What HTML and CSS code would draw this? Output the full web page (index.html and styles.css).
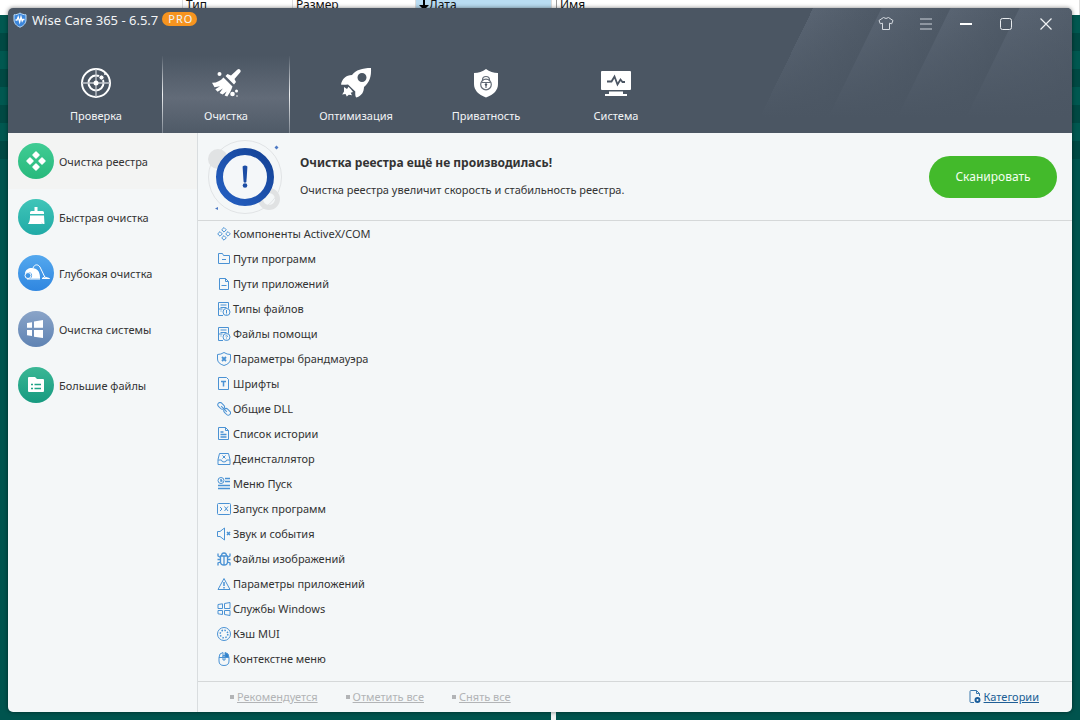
FILE: index.html
```html
<!DOCTYPE html>
<html lang="ru">
<head>
    <meta charset="UTF-8">
    <title>Wise Care 365</title>
    <link rel="stylesheet" href="styles.css">
</head>
<body>
    <div class="backdrop">
        <div class="columns">
            <span class="col col-first"></span>
            <span class="col col-type">Тип</span>
            <span class="col col-size">Размер</span>
            <span class="col col-date"><svg width="10" height="11" viewBox="0 0 10 11"><path d="M4 0h2v5h4l-5 5-5-5h4z"/></svg>Дата</span>
            <span class="col col-name">Имя</span>
        </div>
        <div class="splitter"></div>
    </div>

    <div class="window">
        <header class="top">
            <div class="titlebar">
                <svg class="logo" width="14" height="16" viewBox="0 0 14 16">
                    <path d="M7 1c2 1.300 4 1.800 6 1.800v5c0 3.500-2.500 6-6 7.400C3.500 13.800 1 11.300 1 7.800v-5C3 2.800 5 2.300 7 1z" fill="#3b86dc" stroke="#b9dcfb"/>
                    <path d="M2.500 8h1.500l1.200-3 1.500 5 1.300-5 1.200 4 .8-1.500h1.500" fill="none" stroke="#fff" stroke-width="1.300"/>
                </svg>
                <h1>Wise Care 365 - 6.5.7</h1>
                <span class="pro">PRO</span>
                <div class="controls">
                    <button type="button" aria-label="Оформление">
                        <svg width="16" height="16" viewBox="0 0 16 16" stroke="#d5dae0"><path d="M5.500 1.500Q8 3.500 10.500 1.500L15 4.500l-1.300 3.300-2.200-.6v6.300h-7V7.200l-2.200.6L1 4.500z"/></svg>
                    </button>
                    <button type="button" aria-label="Меню">
                        <svg width="16" height="16" viewBox="0 0 16 16" stroke="#a3abb4" stroke-width="1.500"><path d="M2 3h12M2 8h12M2 13h12"/></svg>
                    </button>
                    <button type="button" aria-label="Свернуть">
                        <svg width="16" height="16" viewBox="0 0 16 16" stroke="#fff" stroke-width="2"><path d="M2 8h12"/></svg>
                    </button>
                    <button type="button" aria-label="Развернуть">
                        <svg width="16" height="16" viewBox="0 0 16 16" stroke="#e8ebee"><rect x="2.500" y="2.500" width="11" height="11" rx="2"/></svg>
                    </button>
                    <button type="button" aria-label="Закрыть">
                        <svg width="16" height="16" viewBox="0 0 16 16" stroke="#f0f2f4" stroke-width="1.200"><path d="M2.500 2.500l11 11M13.500 2.500l-11 11"/></svg>
                    </button>
                </div>
            </div>
            <nav class="tabs">
                <button type="button" class="tab">
                    <svg width="32" height="32" viewBox="0 0 32 32" fill="none" stroke="#fff">
                        <circle cx="16" cy="16" r="14" stroke-width="2"/>
                        <circle cx="16" cy="16" r="7.500" stroke-width="2"/>
                        <path d="M16 2v28M2 16h28" stroke="#c3c8ce" stroke-width="1.300"/>
                        <circle cx="16" cy="16" r="2.500" fill="#fff" stroke="none"/>
                        <circle cx="21.500" cy="10.500" r="2.600" fill="#fff" stroke="#4b5563"/>
                        <circle cx="25" cy="7" r="1" fill="#fff" stroke="none"/>
                    </svg>
                    Проверка
                </button>
                <button type="button" class="tab active">
                    <svg width="32" height="32" viewBox="0 0 32 32" fill="#fff">
                        <path d="M27.500 2.500a2 2 0 0 1 2.800 2.800L24.500 12l1.500 3-2 2.500-8.500-8.500L17.500 7l3.500 1.500z"/>
                        <path d="M13.500 10.500l9 9c-1 3.500-3 7-5.200 9.900l-2.700-1 2-4-4 3.200-3-1.700 3.200-4.300-5.200 3.200-2.300-2.500 4.700-3-5.500 1-2.500-4.500C6.500 16 10.500 13.800 13.500 10.500z"/>
                        <circle cx="9.500" cy="7" r="2"/><circle cx="22.500" cy="27" r="2.300"/><circle cx="26.500" cy="24" r="1.500"/><circle cx="27" cy="29" r=".8"/>
                    </svg>
                    Очистка
                </button>
                <button type="button" class="tab">
                    <svg width="32" height="32" viewBox="0 0 32 32" fill="#fff">
                        <path d="M31 1c.5 8.500-1.500 14.500-7 19-.2 5-2 8.500-7.500 10.500-1-.3-1.500-2.500-1.200-6L8 17.500c-3 .3-6 .5-7 0C2 12 6 8 12 8c4-5 10-7 19-7zM22 6a4.500 4.500 0 1 0 0 9 4.500 4.500 0 0 0 0-9z" fill-rule="evenodd"/>
                        <path d="M4 20l3 2 1.500-2.300c1.500 1.500 3.500 3.500 4.500 5.200l-2.300.8 1.300 2.500-3.200-.5-2 1.800-1.300-2.500-3.300.5 1.800-3z"/>
                    </svg>
                    Оптимизация
                </button>
                <button type="button" class="tab">
                    <svg width="32" height="32" viewBox="0 0 32 32" fill="none">
                        <path d="M16 2c3.500 2.700 7.500 4 12 4v11c0 6-4 10.500-12 13.500C8 27.500 4 23 4 17V6c4.500 0 8.500-1.300 12-4z" fill="#fff"/>
                        <g stroke="#626b77" stroke-width="1.200"><circle cx="16" cy="17.500" r="5.300"/><path d="M12.500 13.500V13a3.500 3.500 0 0 1 7 0v.5M11.500 15.500h9M16 17v4"/></g>
                        <circle cx="16" cy="17.500" r="1.200" fill="#4b5563"/>
                    </svg>
                    Приватность
                </button>
                <button type="button" class="tab">
                    <svg width="32" height="32" viewBox="0 0 32 32" fill="#fff">
                        <path d="M2 4h28q1 0 1 1v17q0 1-1 1H2q-1 0-1-1V5q0-1 1-1zM9 24.500h14V27H9zM5 27h22v2H5z"/>
                        <path d="M7 14.500h4.500l3-5 3 8 3-5 2 2.500H25" fill="none" stroke="#4b5563" stroke-width="1.800"/>
                    </svg>
                    Система
                </button>
            </nav>
        </header>

        <div class="body">
            <nav class="sidebar">
                <button type="button" class="side-item active">
                    <svg class="disc registry" viewBox="0 0 36 36"><path d="M18 9l3 3-3 3-3-3zM12 15l3 3-3 3-3-3zM24 15l3 3-3 3-3-3zM18 21l3 3-3 3-3-3z" stroke="#fff" stroke-width="1.500" stroke-linejoin="round"/></svg>
                    Очистка реестра
                </button>
                <button type="button" class="side-item">
                    <svg class="disc quick" viewBox="0 0 36 36"><path d="M16.500 8h3v4h5q1.500 0 1.500 1.500V15H12v-1.500q0-1.500 1.500-1.500h3zM12 16.500h14l.5 8.500h-2l-1-2 .5 2H10c2-2.500 2-5.500 2-8.500z"/></svg>
                    Быстрая очистка
                </button>
                <button type="button" class="side-item">
                    <svg class="disc deep" viewBox="0 0 36 36"><path d="M7 18c.5-3 3-5 7-5 5 0 8 3.500 8 9.500v1h-9.500a3.500 3.500 0 1 0-5-4.500z"/><g fill="none" stroke="#fff" stroke-width="1"><circle cx="10" cy="20.500" r="3"/><path d="M15 13c1.500-4 5-4 7-1l5 10.500M24 23.500l2.500-1.500 5 1.500zM9 24h13"/></g></svg>
                    Глубокая очистка
                </button>
                <button type="button" class="side-item">
                    <svg class="disc system" viewBox="0 0 36 36"><path d="M9 12l5-.8v5.600H9zM16 10.500l9-1.500v7.800h-9zM9 19h5v6l-5-.8zM16 19h9v8l-9-1.300z"/></svg>
                    Очистка системы
                </button>
                <button type="button" class="side-item">
                    <svg class="disc large" viewBox="0 0 36 36"><path d="M11 10h6l2 2h6q1 0 1 1v11q0 1-1 1H11q-1 0-1-1V11q0-1 1-1z"/><path d="M13 17.500h2m1.500 0h6.500M13 21.500h2m1.500 0h6.500" stroke="#1fa487" stroke-width="1.500"/></svg>
                    Большие файлы
                </button>
            </nav>

            <main class="content">
                <section class="status">
                    <svg class="status-icon" width="76" height="76" viewBox="0 0 76 76">
                        <defs><linearGradient id="ring" x1="1" y1="0" x2="0" y2="1"><stop offset="0" stop-color="#144296"/><stop offset="1" stop-color="#2560c2"/></linearGradient></defs>
                        <circle cx="38" cy="38" r="36.500" fill="none" stroke="#e0e3e5"/>
                        <circle cx="11" cy="20" r="10" fill="#e1e3e4"/>
                        <circle cx="62" cy="60" r="8.500" fill="none" stroke="#e0e2e3" stroke-width="5"/>
                        <circle cx="38" cy="38" r="25.500" fill="#f4f7f9" stroke="url(#ring)" stroke-width="7"/>
                        <path d="M35.600 27.500q2.400-2 4.800 0l-1 15.500q-1.400 1.400-2.800 0z" fill="#1c4da5"/>
                        <circle cx="38" cy="46.500" r="2.300" fill="#1c4da5"/>
                        <path d="M69.500 6.500l2 2-2 2-2-2zM8 69.500l3-1.500v3z" fill="#4d79c4"/>
                    </svg>
                    <div class="status-text">
                        <h2>Очистка реестра ещё не производилась!</h2>
                        <p>Очистка реестра увеличит скорость и стабильность реестра.</p>
                    </div>
                    <button type="button" class="scan">Сканировать</button>
                </section>

                <ul class="list">
                    <li><svg viewBox="0 0 14 14"><path d="M7 .5l2.300 2.300L7 5.100 4.700 2.800zM3 4.600l2.300 2.300L3 9.200.7 6.900zM11 4.600l2.300 2.300L11 9.200 8.700 6.900zM7 8.600l2.300 2.300L7 13.200l-2.300-2.300z"/></svg>Компоненты ActiveX/COM</li>
                    <li><svg viewBox="0 0 14 14"><path d="M1.500 1.500h4l1 2h6v8h-11zM5 7.500h4"/></svg>Пути программ</li>
                    <li><svg viewBox="0 0 14 14"><path d="M2.500 1.500h6l3 3v8h-9zM8.500 1.500v3h3M4.500 8.500h5"/></svg>Пути приложений</li>
                    <li><svg viewBox="0 0 14 14"><path d="M6 13.500H1.500V.5h10v6M3.500 3h6M3.500 5.500h6M3.500 9h1M1.500 7h4"/><circle cx="9.500" cy="10" r="3.500"/><path d="M9.500 8v3M9.500 11.500v1"/></svg>Типы файлов</li>
                    <li><svg viewBox="0 0 14 14"><path d="M6 13.500H1.500V.5h10v6M3.500 3h6M3.500 5.500h6M3.500 9h1M1.500 7h4"/><circle cx="9.500" cy="10" r="3.500"/><path d="M8.500 9q1-1.500 2 0l-1 1.500M9.500 11.500v.8"/></svg>Файлы помощи</li>
                    <li><svg viewBox="0 0 14 14"><path d="M7 .5q3 2 6.500 2v4.500q0 4.500-6.500 6.500Q.5 11.500.5 7V2.500Q4 2.500 7 .5z"/><path d="M5 5l4 4M9 5L5 9" stroke-width="1.800"/></svg>Параметры брандмауэра</li>
                    <li><svg viewBox="0 0 14 14"><path d="M1.500 .5h8l2 2v10h-10z"/><path d="M4 4.500h5M6.500 4.500v5" stroke-width="1.500"/></svg>Шрифты</li>
                    <li><svg viewBox="0 0 14 14"><g transform="rotate(45 7 7)"><rect x="-1" y="4.500" width="7.500" height="4.500" rx="2.200"/><rect x="7.500" y="4.500" width="7.500" height="4.500" rx="2.200"/><path d="M3 7h8"/></g></svg>Общие DLL</li>
                    <li><svg viewBox="0 0 14 14"><path d="M1.500 .5h7l3 3v9h-10zM8.500 .5v3h3"/><path d="M3.500 5h3M3.500 7.500h6M3.500 10h6" stroke-width="1.400"/></svg>Список истории</li>
                    <li><svg viewBox="0 0 14 14"><path d="M2.500 1.500h9l1.500 6v5H1v-5zM1 8h3.500q0 2 2.500 2t2.500-2H13M5.500 3.500l3 3M8.500 3.500l-3 3"/></svg>Деинсталлятор</li>
                    <li><svg viewBox="0 0 14 14"><circle cx="4" cy="3.500" r="3"/><path d="M4 2v2h1.500M8 1.500h5M8 4.500h5M1 8.500h12M1 11.500h12" stroke-width="1.500"/></svg>Меню Пуск</li>
                    <li><svg viewBox="0 0 14 14"><rect x=".5" y="1.500" width="13" height="11" rx="1"/><path d="M3 5l2 2-2 2M7.500 4.500l3.500 4.500M11 4.500L7.500 9"/></svg>Запуск программ</li>
                    <li><svg viewBox="0 0 14 14"><path d="M.5 4.500h2.500l4.500-3.500v12L3 9.500H.5z"/><path d="M10 5l3 3M13 5l-3 3" stroke-width="1.500"/></svg>Звук и события</li>
                    <li><svg viewBox="0 0 14 14"><path d="M3.500 4h7v6q0 3-3.500 3t-3.500-3zM4.500 4q0-3 2.500-3t2.500 3M7 4v9M3.500 5.500L1 4V1.500M10.500 5.500L13 4V1.500M.5 7.500h3M10.500 7.500h3M3.500 10L1 11v2.500M10.500 10l2.500 1v2.500" stroke-width="1.300"/></svg>Файлы изображений</li>
                    <li><svg viewBox="0 0 14 14"><path d="M7 1.500l6 11H1z"/><path d="M7 5v4M7 10v1.500" stroke-width="1.500"/></svg>Параметры приложений</li>
                    <li><svg viewBox="0 0 14 14"><path d="M1 2.500l4.500-.7v4.700H1zM7.500 1.500l5.500-1v6H7.500zM1 8.500h4.500v4L1 11.800zM7.500 8.500H13v5l-5.500-1z"/></svg>Службы Windows</li>
                    <li><svg viewBox="0 0 14 14"><circle cx="7" cy="7" r="6.500"/><circle cx="7" cy="7" r="3.800" stroke-width="1.500" stroke-dasharray="1.500 1.480"/></svg>Кэш MUI</li>
                    <li><svg viewBox="0 0 14 14"><path d="M2 5.500h10v3.500q0 4.500-5 4.500T2 9zM2 5.500q0-4.500 4-5V5.500M6 3.500h2V8H6z"/><path d="M8 .5q4 .5 4 5H8z" fill="#2f80c9"/></svg>Контекстне меню</li>
                </ul>

                <footer class="bottom">
                    <a href="#" class="pick">Рекомендуется</a>
                    <a href="#" class="pick">Отметить все</a>
                    <a href="#" class="pick">Снять все</a>
                    <a href="#" class="categories"><svg width="12" height="14" viewBox="0 0 12 14"><path d="M5 12.500H2q-1 0-1-1v-10q0-1 1-1h5.500l3 3V6M7.500.5v3h3" fill="none" stroke="#3c79ad"/><circle cx="8.500" cy="10" r="2" fill="none" stroke="#1d5f9c" stroke-width="2"/></svg><span>Категории</span></a>
                </footer>
            </main>
        </div>
    </div>
</body>
</html>
```
FILE: styles.css
```css
* {
    box-sizing: border-box;
}

body {
    margin: 0;
    padding: 8px;
    min-height: 100vh;
    display: flex;
    background: #00544e;
    font-family: Tahoma, "Noto Sans", sans-serif;
    font-size: 11px;
    color: #333;
}

button {
    font: inherit;
    color: inherit;
    background: none;
    border: 0;
    padding: 0;
    cursor: pointer;
}

h1, h2, p, ul {
    margin: 0;
    padding: 0;
}

/* окно позади программы */
.backdrop {
    position: absolute;
    inset: 0;
    overflow: hidden;
    background: repeating-linear-gradient(#005850 0 18px, #004943 18px 36px) 0 15px / 100% 144px no-repeat;
}

.columns {
    display: flex;
    height: 15px;
    background: #fff;
    color: #111;
    font-size: 12px;
    line-height: 10px;
}

.columns svg {
    vertical-align: top;
}

.col {
    border-right: 1px solid #ddd;
    padding-left: 3px;
    white-space: nowrap;
}

.col-first { width: 183px; }
.col-type { width: 110px; }
.col-size { width: 123px; }

.col-date {
    width: 136px;
    background: #b9dcf2;
}

.col-name {
    flex: 1;
    margin-left: 4px;
    border-left: 1px solid #999;
}

.splitter {
    position: absolute;
    left: 551px;
    bottom: 0;
    width: 5px;
    height: 8px;
    background: #edf1f1;
}

.window {
    position: relative;
    flex: 1;
    display: flex;
    flex-direction: column;
    background: #f4f7f8;
    border-radius: 5px;
    overflow: hidden;
    box-shadow: 0 0 4px rgba(0,0,0,0.5);
}

.top {
    height: 125px;
    color: #f2f4f6;
    background:
        linear-gradient(to bottom, transparent, #4b5663 88%) right / 310px 100% no-repeat,
        linear-gradient(116deg, transparent 46px, #596472 46px, #4e5966 107px, #596472 108px, #4e5966 169px, #596472 170px, #4e5966 231px, #596472 232px, #4e5966 320px) right / 310px 100% no-repeat,
        #4b5663;
}

.titlebar {
    display: flex;
    align-items: flex-start;
    height: 48px;
    padding: 4px 18px 0 5px;
}

.titlebar h1 {
    margin: 0 4px 0 5px;
    font-size: 13px;
    font-weight: normal;
    line-height: 16px;
}

.pro {
    padding: 0 4px 0 6px;
    border-radius: 7px;
    background: #f7941f;
    font-size: 11px;
    line-height: 14px;
    letter-spacing: 1px;
}

.controls {
    display: flex;
    gap: 24px;
    margin-left: auto;
    padding-top: 4px;
}

.controls button {
    width: 16px;
    height: 16px;
}

.controls svg {
    display: block;
    fill: none;
}

.tabs {
    display: flex;
    gap: 2px;
    height: 77px;
    padding-left: 24px;
}

.tab {
    display: flex;
    flex-direction: column;
    align-items: center;
    gap: 9px;
    width: 128px;
    padding-top: 11px;
    line-height: 16px;
}

.tab.active {
    border: solid;
    border-width: 0 1px;
    border-image: linear-gradient(transparent, #eef0f2 50%, #79828d) 1;
    background: linear-gradient(#4b5663, #626b78 55%, #4f5a67);
}

.body {
    flex: 1;
    display: flex;
}

.sidebar {
    width: 190px;
    border-right: 1px solid #d9dddf;
}

.side-item {
    display: flex;
    align-items: center;
    gap: 5px;
    width: 100%;
    height: 56px;
    padding-left: 10px;
    text-align: left;
}

.side-item.active {
    background: #f3f4f3;
}

.disc {
    width: 36px;
    height: 36px;
    border-radius: 50%;
    fill: #fff;
}

.registry { background: linear-gradient(#40cc94, #28b97c); }
.quick { background: linear-gradient(#40c5b8, #20aaa6); }
.deep { background: linear-gradient(#54a8ee, #2f86e0); }
.system { background: linear-gradient(#8aa4c8, #5f83b3); }
.large { background: linear-gradient(#3ab795, #169a80); }

.content {
    flex: 1;
    display: flex;
    flex-direction: column;
}

.status {
    display: flex;
    align-items: center;
    height: 88px;
    padding: 0 15px 0 9px;
    border-bottom: 1px solid #d5d8d9;
}

.status-text {
    margin-left: 17px;
    padding-bottom: 2px;
}

.status-text h2 {
    font-size: 12px;
    line-height: 18px;
}

.status-text p {
    margin-top: 10px;
    line-height: 16px;
}

.scan {
    margin-left: auto;
    width: 128px;
    height: 42px;
    border-radius: 21px;
    background: #43ba2b;
    color: #f3fff0;
    font-size: 12px;
}

.list {
    flex: 1;
    list-style: none;
    padding-left: 19px;
}

.list li {
    display: flex;
    align-items: center;
    gap: 2px;
    height: 25px;
}

.list svg {
    width: 14px;
    height: 14px;
    fill: none;
    stroke: #4a92d4;
}

.bottom {
    display: flex;
    align-items: center;
    gap: 28px;
    height: 31px;
    padding: 0 33px 1px 32px;
    border-top: 1px solid #d5d8d9;
}

.pick {
    color: #b2b4b6;
}

.pick::before {
    content: "";
    display: inline-block;
    width: 4px;
    height: 4px;
    margin-right: 3px;
    vertical-align: 2px;
    background: #b2b4b6;
}

.categories {
    display: flex;
    align-items: center;
    gap: 3px;
    margin-left: auto;
    color: #205f96;
}
```
